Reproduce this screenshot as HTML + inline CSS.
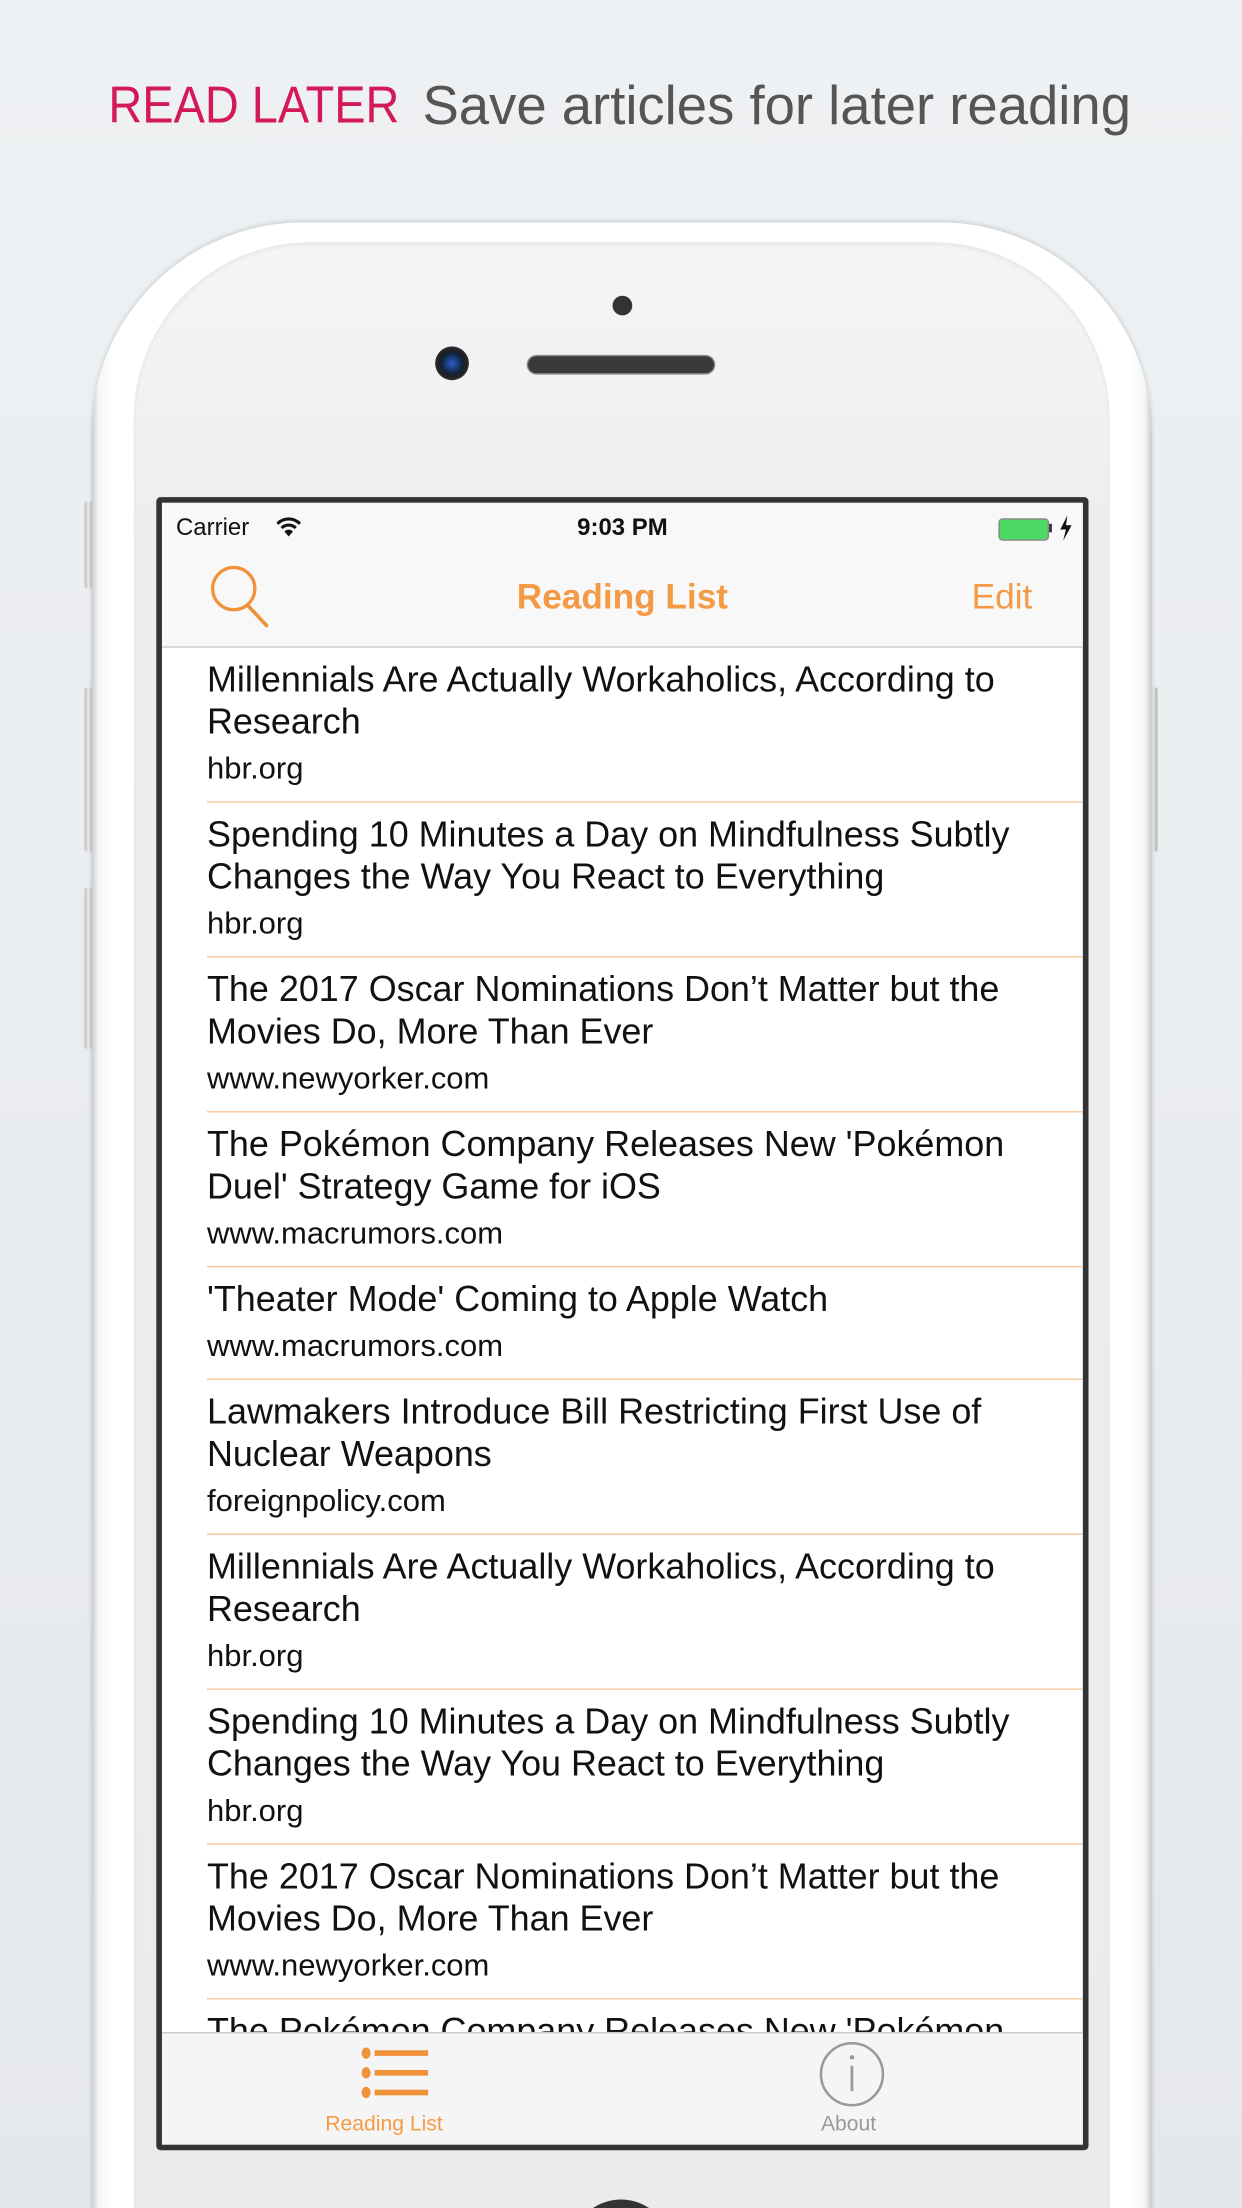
<!DOCTYPE html>
<html><head><meta charset="utf-8">
<style>
html,body{margin:0;padding:0;overflow:hidden;}
body{width:1242px;height:2208px;overflow:hidden;background:linear-gradient(#eef1f3,#e5e8eb);position:relative;font-family:"Liberation Sans",sans-serif;}
#w{position:absolute;left:0;top:0;width:882px;height:1568px;overflow:hidden;transform:scale(1.40816);transform-origin:0 0;}
.abs{position:absolute;}
.hdr{top:52px;white-space:nowrap;line-height:46px;transform-origin:0 0;}
.body{left:65px;top:158px;width:753px;height:1420px;border-radius:150px 150px 0 0;background:linear-gradient(90deg,#c9cbcd 0,#f4f5f6 5px,#fff 14px,#fff 739px,#f4f5f6 748px,#c9cbcd 753px);box-shadow:0 -1px 3px rgba(0,0,0,.15);}
.face{left:95px;top:172px;width:693px;height:1400px;border-radius:125px 125px 0 0;background:linear-gradient(#f4f5f6,#eceef0 200px,#e9ebed);box-shadow:inset 0 2px 3px rgba(0,0,0,.06);}
.btn{background:linear-gradient(90deg,#bbb,#eee,#aaa);width:6px;border-radius:2px;}
.screen{left:111px;top:353px;width:654px;height:1166px;border:4px solid #333;border-radius:3px;background:#fff;overflow:hidden;}
.row{position:absolute;left:32px;right:0;border-bottom:1px solid #f5c99b;}
.t{font-size:25.5px;line-height:30px;color:#111;white-space:nowrap;}
.d{font-size:22px;line-height:24px;color:#111;margin-top:6px;white-space:nowrap;}
</style></head><body><div id="w">
<div class="abs hdr" style="left:77px;color:#d3195a;font-size:37px;transform:scaleX(0.9);">READ LATER</div>
<div class="abs hdr" style="left:300px;color:#555;font-size:38.7px;top:53px;">Save articles for later reading</div>

<div class="abs btn" style="left:60px;top:356px;height:62px"></div>
<div class="abs btn" style="left:60px;top:488px;height:117px"></div>
<div class="abs btn" style="left:60px;top:630px;height:115px"></div>
<div class="abs btn" style="left:816px;top:488px;height:117px"></div>
<div class="abs body"></div>
<div class="abs face"></div>
<div class="abs" style="left:435px;top:210px;width:14px;height:14px;border-radius:50%;background:#333"></div>
<div class="abs" style="left:309px;top:246px;width:24px;height:24px;border-radius:50%;background:radial-gradient(circle,#2a5bd0 0,#123 45%,#222 60%,#555 100%)"></div>
<div class="abs" style="left:375px;top:253px;width:132px;height:12px;border-radius:6px;background:#3a3a3a;box-shadow:0 0 0 1px #888"></div>
<div class="abs" style="left:405px;top:1562px;width:72px;height:72px;border-radius:50%;background:#333"></div>

<div class="abs screen">
 <div class="abs" style="left:0;top:0;width:654px;height:102px;background:#f8f8f8;border-bottom:1px solid #ccc"></div>
 <div class="abs" style="left:10px;top:8px;font-size:17px;color:#111">Carrier</div>
 <svg class="abs" style="left:80px;top:9px" width="20" height="16" viewBox="0 0 20 16"><path d="M2 6 A11 11 0 0 1 18 6" stroke="#111" stroke-width="2.2" fill="none"/><path d="M5 9 A7 7 0 0 1 15 9" stroke="#111" stroke-width="2.2" fill="none"/><path d="M10 15 L7 11.5 A4 4 0 0 1 13 11.5Z" fill="#111"/></svg>
 <div class="abs" style="left:0;width:654px;top:8px;text-align:center;font-size:17px;font-weight:bold;color:#111">9:03 PM</div>
 <div class="abs" style="left:594px;top:11px;width:34px;height:14px;border:1px solid #888;border-radius:3px;background:#4cd964"></div>
 <div class="abs" style="left:630px;top:15px;width:2px;height:6px;background:#333"></div>
 <svg class="abs" style="left:637px;top:9px" width="10" height="18" viewBox="0 0 10 18"><path d="M6 0 L1 10 H5 L3 18 L9 7 H5 Z" fill="#111"/></svg>
 <svg class="abs" style="left:34px;top:44px" width="46" height="48" viewBox="0 0 46 48"><circle cx="17" cy="17" r="15" stroke="#f0923a" stroke-width="2.3" fill="none"/><path d="M27 29 L41 44" stroke="#f0923a" stroke-width="2.6"/></svg>
 <div class="abs" style="left:0;width:654px;top:53px;text-align:center;font-size:25px;font-weight:bold;color:#f59a44">Reading List</div>
 <div class="abs" style="left:575px;top:53px;font-size:25px;color:#f59a44">Edit</div>

 <div class="row" style="top:103px;height:109px;"><div style="padding-top:8px"><div class="t">Millennials Are Actually Workaholics, According to</div><div class="t">Research</div><div class="d">hbr.org</div></div></div>
 <div class="row" style="top:213px;height:109px;"><div style="padding-top:8px"><div class="t">Spending 10 Minutes a Day on Mindfulness Subtly</div><div class="t">Changes the Way You React to Everything</div><div class="d">hbr.org</div></div></div>
 <div class="row" style="top:323px;height:109px;"><div style="padding-top:8px"><div class="t">The 2017 Oscar Nominations Don’t Matter but the</div><div class="t">Movies Do, More Than Ever</div><div class="d">www.newyorker.com</div></div></div>
 <div class="row" style="top:433px;height:109px;"><div style="padding-top:8px"><div class="t">The Pokémon Company Releases New 'Pokémon</div><div class="t">Duel' Strategy Game for iOS</div><div class="d">www.macrumors.com</div></div></div>
 <div class="row" style="top:543px;height:79px;"><div style="padding-top:8px"><div class="t">'Theater Mode' Coming to Apple Watch</div><div class="d">www.macrumors.com</div></div></div>
 <div class="row" style="top:623px;height:109px;"><div style="padding-top:8px"><div class="t">Lawmakers Introduce Bill Restricting First Use of</div><div class="t">Nuclear Weapons</div><div class="d">foreignpolicy.com</div></div></div>
 <div class="row" style="top:733px;height:109px;"><div style="padding-top:8px"><div class="t">Millennials Are Actually Workaholics, According to</div><div class="t">Research</div><div class="d">hbr.org</div></div></div>
 <div class="row" style="top:843px;height:109px;"><div style="padding-top:8px"><div class="t">Spending 10 Minutes a Day on Mindfulness Subtly</div><div class="t">Changes the Way You React to Everything</div><div class="d">hbr.org</div></div></div>
 <div class="row" style="top:953px;height:109px;"><div style="padding-top:8px"><div class="t">The 2017 Oscar Nominations Don’t Matter but the</div><div class="t">Movies Do, More Than Ever</div><div class="d">www.newyorker.com</div></div></div>
 <div class="row" style="top:1063px;height:109px;border:none"><div style="padding-top:8px"><div class="t">The Pokémon Company Releases New 'Pokémon</div></div></div>

 <div class="abs" style="left:0;top:1086px;width:654px;height:80px;background:#f5f5f5;border-top:1px solid #ccc"></div>
 <svg class="abs" style="left:140px;top:1095px" width="50" height="42" viewBox="0 0 50 42"><g fill="#f0923a"><ellipse cx="5" cy="6" rx="3.2" ry="4"/><ellipse cx="5" cy="20" rx="3.2" ry="4"/><ellipse cx="5" cy="34" rx="3.2" ry="4"/><rect x="11" y="4" width="38" height="4"/><rect x="11" y="18" width="38" height="4"/><rect x="11" y="32" width="38" height="4"/></g></svg>
 <div class="abs" style="left:116px;top:1143px;font-size:15px;color:#f59a44">Reading List</div>
 <svg class="abs" style="left:466px;top:1092px" width="48" height="48" viewBox="0 0 48 48"><ellipse cx="24" cy="24" rx="22" ry="22" stroke="#999" stroke-width="1.8" fill="none"/><circle cx="24" cy="12" r="1.6" fill="#999"/><rect x="23" y="18" width="2" height="18" fill="#999"/></svg>
 <div class="abs" style="left:468px;top:1143px;font-size:15px;color:#999">About</div>
</div>
</div></body></html>
